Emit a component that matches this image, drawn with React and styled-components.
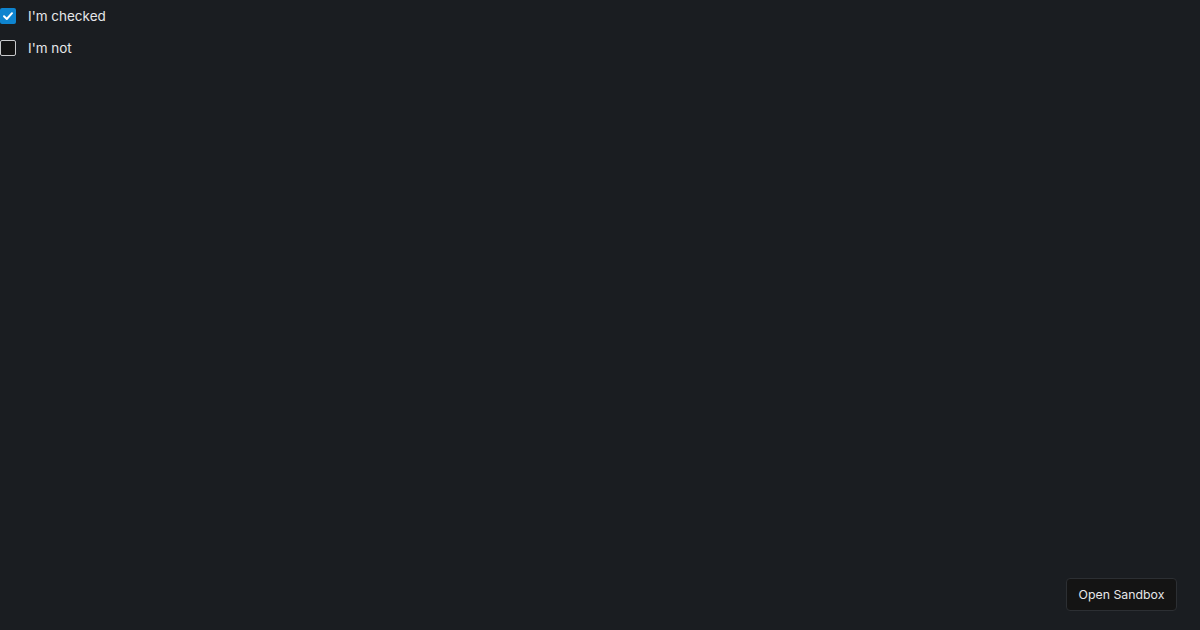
import styled, { createGlobalStyle } from 'styled-components';

const Global = createGlobalStyle`
  html, body {
    margin: 0;
    padding: 0;
    height: 100%;
    background: #1a1d21;
  }
  #root {
    min-height: 100vh;
  }
  * {
    box-sizing: border-box;
  }
`;

const Page = styled.div`
  position: relative;
  min-height: 100vh;
  padding-top: 8px;
  font-family: Inter, "Noto Sans", sans-serif;
  color: #e6e7e9;
`;

const List = styled.div`
  display: flex;
  flex-direction: column;
  gap: 16px;
`;

const Row = styled.label`
  display: flex;
  align-items: center;
  gap: 12px;
  height: 16px;
  font-size: 13.5px;
  line-height: 16px;
  cursor: pointer;

  span:last-child {
    margin-top: -1px;
  }
`;

const Box = styled.span`
  width: 16px;
  height: 16px;
  border-radius: 2px;
  display: flex;
  align-items: center;
  justify-content: center;
  background: ${(p) => (p.checked ? '#0e84cf' : '#141414')};
  border: ${(p) => (p.checked ? 'none' : '1.5px solid #c9cacc')};
`;

const SandboxButton = styled.button`
  position: fixed;
  right: 23px;
  bottom: 19px;
  width: 111px;
  height: 33px;
  padding: 0;
  background: #141414;
  border: 1px solid #2c2f33;
  border-radius: 4px;
  color: #e6e7e9;
  font-family: Inter, "Noto Sans", sans-serif;
  font-size: 12.3px;
  cursor: pointer;
`;

const Check = () => (
  <svg width="12" height="12" viewBox="0 0 12 12">
    <path d="M2 6.2 L4.8 9 L10 3.2" fill="none" stroke="#fff" strokeWidth="2" strokeLinecap="round" strokeLinejoin="round" />
  </svg>
);

const Checkbox = ({ checked, children }) => (
  <Row>
    <Box checked={checked}>{checked && <Check />}</Box>
    <span>{children}</span>
  </Row>
);

export default function App() {
  return (
    <Page>
      <Global />
      <List>
        <Checkbox checked>I'm checked</Checkbox>
        <Checkbox>I'm not</Checkbox>
      </List>
      <SandboxButton>Open Sandbox</SandboxButton>
    </Page>
  );
}
